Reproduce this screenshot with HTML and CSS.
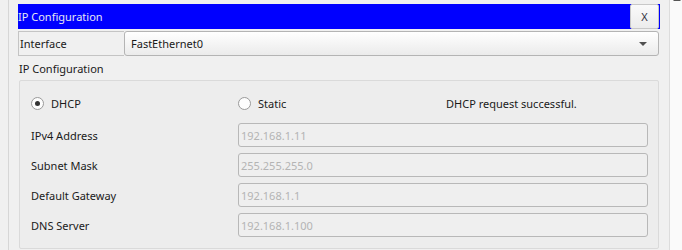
FILE: index.html
```html
<!DOCTYPE html>
<html>
<head>
<meta charset="utf-8">
<link rel="stylesheet" href="styles.css">
</head>
<body>
<div class="page">
  <div class="main">
    <div class="titlebar">
      <span class="title">IP Configuration</span>
      <button class="close">X</button>
    </div>
    <div class="iface-row">
      <div class="iface-label">Interface</div>
      <div class="select">
        <span>FastEthernet0</span>
        <svg class="arrow" width="8" height="4" viewBox="0 0 8 4"><path d="M0 0H8L4 4Z" fill="#505050"/></svg>
      </div>
    </div>
    <div class="section-label">IP Configuration</div>
    <div class="panel">
      <div class="radio-row">
        <label class="radio"><span class="dot checked"></span>DHCP</label>
        <label class="radio"><span class="dot"></span>Static</label>
        <span class="status">DHCP request successful.</span>
      </div>
      <div class="field"><span class="flabel">IPv4 Address</span><div class="input">192.168.1.11</div></div>
      <div class="field"><span class="flabel">Subnet Mask</span><div class="input">255.255.255.0</div></div>
      <div class="field"><span class="flabel">Default Gateway</span><div class="input">192.168.1.1</div></div>
      <div class="field"><span class="flabel">DNS Server</span><div class="input">192.168.1.100</div></div>
    </div>
  </div>
  <div class="scrollbar"><span class="up"></span></div>
</div>
</body>
</html>
```

FILE: styles.css
```css
* { box-sizing: border-box; }
html, body { margin: 0; padding: 0; }
body {
  background: #f0f0f0;
  font-family: "Noto Sans", "Open Sans", sans-serif;
  font-size: 11px;
  color: #1a1a1a;
  width: 682px;
  height: 250px;
  overflow: hidden;
}
.page {
  display: flex;
  height: 250px;
}
.main {
  flex: 1;
  margin-left: 8px;
  border-left: 1px solid #d6d6d6;
  padding: 4px 9px 0 9px;
}
.titlebar {
  height: 25px;
  background: #0000ff;
  display: flex;
  align-items: center;
  justify-content: space-between;
  padding-right: 1px;
}
.title {
  color: #e6e6f4;
  font-size: 11px;
}
.close {
  width: 29px;
  height: 25px;
  margin: 0;
  padding: 0;
  border: 1px solid #c8c8c8;
  border-radius: 2px;
  background: linear-gradient(#fafafa, #ececec);
  font-family: "Noto Sans", sans-serif;
  font-size: 11px;
  color: #303040;
}
.iface-row {
  display: flex;
  height: 25px;
  margin-top: 2px;
}
.iface-label {
  width: 106px;
  border: 1px solid #c4c4c4;
  border-right: none;
  display: flex;
  align-items: center;
  padding-left: 1px;
}
.select {
  flex: 1;
  margin-right: 1px;
  border: 1px solid #b4b4b4;
  border-radius: 3px;
  background: linear-gradient(#ffffff, #ebebeb);
  display: flex;
  align-items: center;
  justify-content: space-between;
  padding: 0 11px 0 6px;
}
.arrow { display: block; }
.section-label {
  height: 24px;
  display: flex;
  align-items: center;
  padding-left: 1px;
}
.panel {
  margin-left: 1px;
  margin-right: 1px;
  height: 169px;
  border: 1px solid #dadada;
  border-radius: 2px;
  background: #ededed;
  padding: 12px 10px 0 11px;
  display: flex;
  flex-direction: column;
  gap: 6px;
}
.radio-row {
  display: grid;
  grid-template-columns: 207px 208px 1fr;
  height: 20px;
  align-items: center;
  margin-bottom: 4px;
}
.radio {
  display: flex;
  align-items: center;
  gap: 7px;
}
.dot {
  width: 13px;
  height: 13px;
  border-radius: 50%;
  border: 1px solid #9a9a9a;
  background: #fdfdfd;
  position: relative;
}
.dot.checked::after {
  content: "";
  position: absolute;
  left: 3px;
  top: 3px;
  width: 5px;
  height: 5px;
  border-radius: 50%;
  background: #333;
}
.field {
  display: grid;
  grid-template-columns: 207px 1fr;
  height: 24px;
  align-items: center;
}
.input {
  height: 24px;
  border: 1px solid #b8b8b8;
  border-radius: 3px;
  background: #efefef;
  color: #b4b4b4;
  display: flex;
  align-items: center;
  padding-left: 2px;
}
.scrollbar {
  width: 13px;
  border-left: 1px solid #dcdcdc;
  background: #fafafa;
  position: relative;
}
.up {
  position: absolute;
  left: 3px;
  top: -3px;
  width: 0;
  height: 0;
  border-left: 4px solid transparent;
  border-right: 4px solid transparent;
  border-bottom: 4px solid #555;
}
```
